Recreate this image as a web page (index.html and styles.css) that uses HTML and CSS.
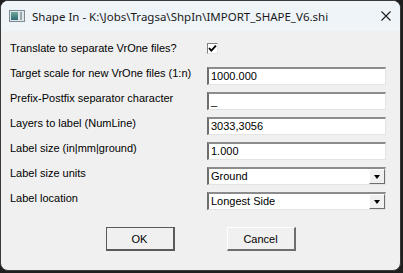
FILE: index.html
```html
<!DOCTYPE html>
<html>
<head>
<meta charset="utf-8">
<link rel="stylesheet" href="styles.css">
</head>
<body>
<div class="window">
  <div class="titlebar">
    <svg class="appicon" width="16" height="12" viewBox="0 0 16 12">
      <defs>
        <linearGradient id="g" x1="0" y1="0" x2="0" y2="1">
          <stop offset="0" stop-color="#6fa89a"/>
          <stop offset="1" stop-color="#2f6a78"/>
        </linearGradient>
      </defs>
      <rect x="0.5" y="0.5" width="15" height="11" fill="#dfe6ea" stroke="#7d8a92"/>
      <rect x="2" y="2" width="7" height="8" fill="url(#g)"/>
      <rect x="11" y="2" width="2" height="8" fill="#9aa6ad"/>
    </svg>
    <span class="title">Shape In - K:\Jobs\Tragsa\ShpIn\IMPORT_SHAPE_V6.shi</span>
    <svg class="close" width="10" height="10" viewBox="0 0 10 10">
      <path d="M0.5 0.5 L9.5 9.5 M9.5 0.5 L0.5 9.5" stroke="#1b1b1b" stroke-width="1.1" fill="none"/>
    </svg>
  </div>
  <div class="content">
    <div class="form">
      <div class="label">Translate to separate VrOne files?</div>
      <div class="field"><span class="checkbox"><svg width="9" height="9" viewBox="0 0 9 9"><path d="M1 4 L3.3 6.6 L8 1.6" stroke="#000" stroke-width="1.8" fill="none"/></svg></span></div>

      <div class="label">Target scale for new VrOne files (1:n)</div>
      <div class="field"><div class="input">1000.000</div></div>

      <div class="label">Prefix-Postfix separator character</div>
      <div class="field"><div class="input">_</div></div>

      <div class="label">Layers to label (NumLine)</div>
      <div class="field"><div class="input">3033,3056</div></div>

      <div class="label">Label size (in|mm|ground)</div>
      <div class="field"><div class="input">1.000</div></div>

      <div class="label">Label size units</div>
      <div class="field"><div class="input combo"><span class="val">Ground</span><span class="drop"><span class="tri"></span></span></div></div>

      <div class="label">Label location</div>
      <div class="field"><div class="input combo"><span class="val">Longest Side</span><span class="drop"><span class="tri"></span></span></div></div>
    </div>
    <div class="buttons">
      <div class="btn default">OK</div>
      <div class="btn">Cancel</div>
    </div>
  </div>
</div>
</body>
</html>
```
FILE: styles.css
```css
html, body {
  margin: 0;
  padding: 0;
}
body {
  width: 403px;
  height: 273px;
  overflow: hidden;
  background: #1e1e1e;
  font-family: "Liberation Sans", Arial, sans-serif;
}
.window {
  box-sizing: border-box;
  width: 401px;
  height: 271px;
  border: 1px solid #3a3a3a;
  border-radius: 8px;
  background: #f0f0f0;
  overflow: hidden;
  display: flex;
  flex-direction: column;
}
.titlebar {
  height: 30px;
  flex: none;
  background: #eff4f9;
  display: flex;
  align-items: center;
  padding-left: 8px;
  padding-right: 9px;
}
.appicon {
  flex: none;
  margin-top: -1px;
}
.title {
  margin-left: 7px;
  font-family: "Noto Sans", sans-serif;
  font-size: 11.5px;
  color: #1a1a1a;
  flex: 1;
  white-space: nowrap;
}
.close {
  flex: none;
  margin-top: -1px;
}
.content {
  flex: 1;
  padding: 11px 0 0 9px;
}
.form {
  display: grid;
  grid-template-columns: 197px 179px;
  grid-auto-rows: 18px;
  row-gap: 7px;
}
.label {
  font-size: 11px;
  line-height: 13px;
  color: #000;
  white-space: nowrap;
}
.field {
  display: flex;
}
.checkbox {
  box-sizing: border-box;
  width: 11px;
  height: 11px;
  margin-top: 1px;
  background: #fff;
  border-top: 1px solid #808080;
  border-left: 1px solid #808080;
  border-right: 1px solid #e6e6e6;
  border-bottom: 1px solid #e6e6e6;
  display: flex;
  align-items: center;
  justify-content: center;
}
.input {
  box-sizing: border-box;
  width: 179px;
  height: 18px;
  background: #fff;
  border-top: 2px solid #8c8c8c;
  border-left: 2px solid #6e6e6e;
  border-right: 1px solid #e3e3e3;
  border-bottom: 1px solid #e3e3e3;
  font-size: 11px;
  line-height: 15px;
  padding-left: 2px;
  color: #000;
  display: flex;
  align-items: center;
}
.combo {
  padding-right: 0;
}
.combo .val {
  flex: 1;
}
.drop {
  box-sizing: border-box;
  width: 16px;
  height: 15px;
  background: #f0f0f0;
  border-top: 1px solid #ffffff;
  border-left: 1px solid #ffffff;
  border-right: 1px solid #6e6e6e;
  border-bottom: 1px solid #6e6e6e;
  display: flex;
  align-items: center;
  justify-content: center;
}
.tri {
  width: 0;
  height: 0;
  border-left: 3.5px solid transparent;
  border-right: 3.5px solid transparent;
  border-top: 4px solid #000;
}
.buttons {
  display: flex;
  justify-content: center;
  gap: 52px;
  margin-top: 17px;
  margin-left: -9px;
}
.btn {
  box-sizing: border-box;
  width: 69px;
  height: 24px;
  background: #f0f0f0;
  border-top: 1px solid #ffffff;
  border-left: 1px solid #ffffff;
  border-right: 2px solid #6e6e6e;
  border-bottom: 2px solid #6e6e6e;
  font-size: 11px;
  display: flex;
  align-items: center;
  justify-content: center;
  color: #000;
}
.btn.default {
  border: 1px solid #5a5a5a;
  border-right-width: 2px;
  border-bottom-width: 2px;
}
```
